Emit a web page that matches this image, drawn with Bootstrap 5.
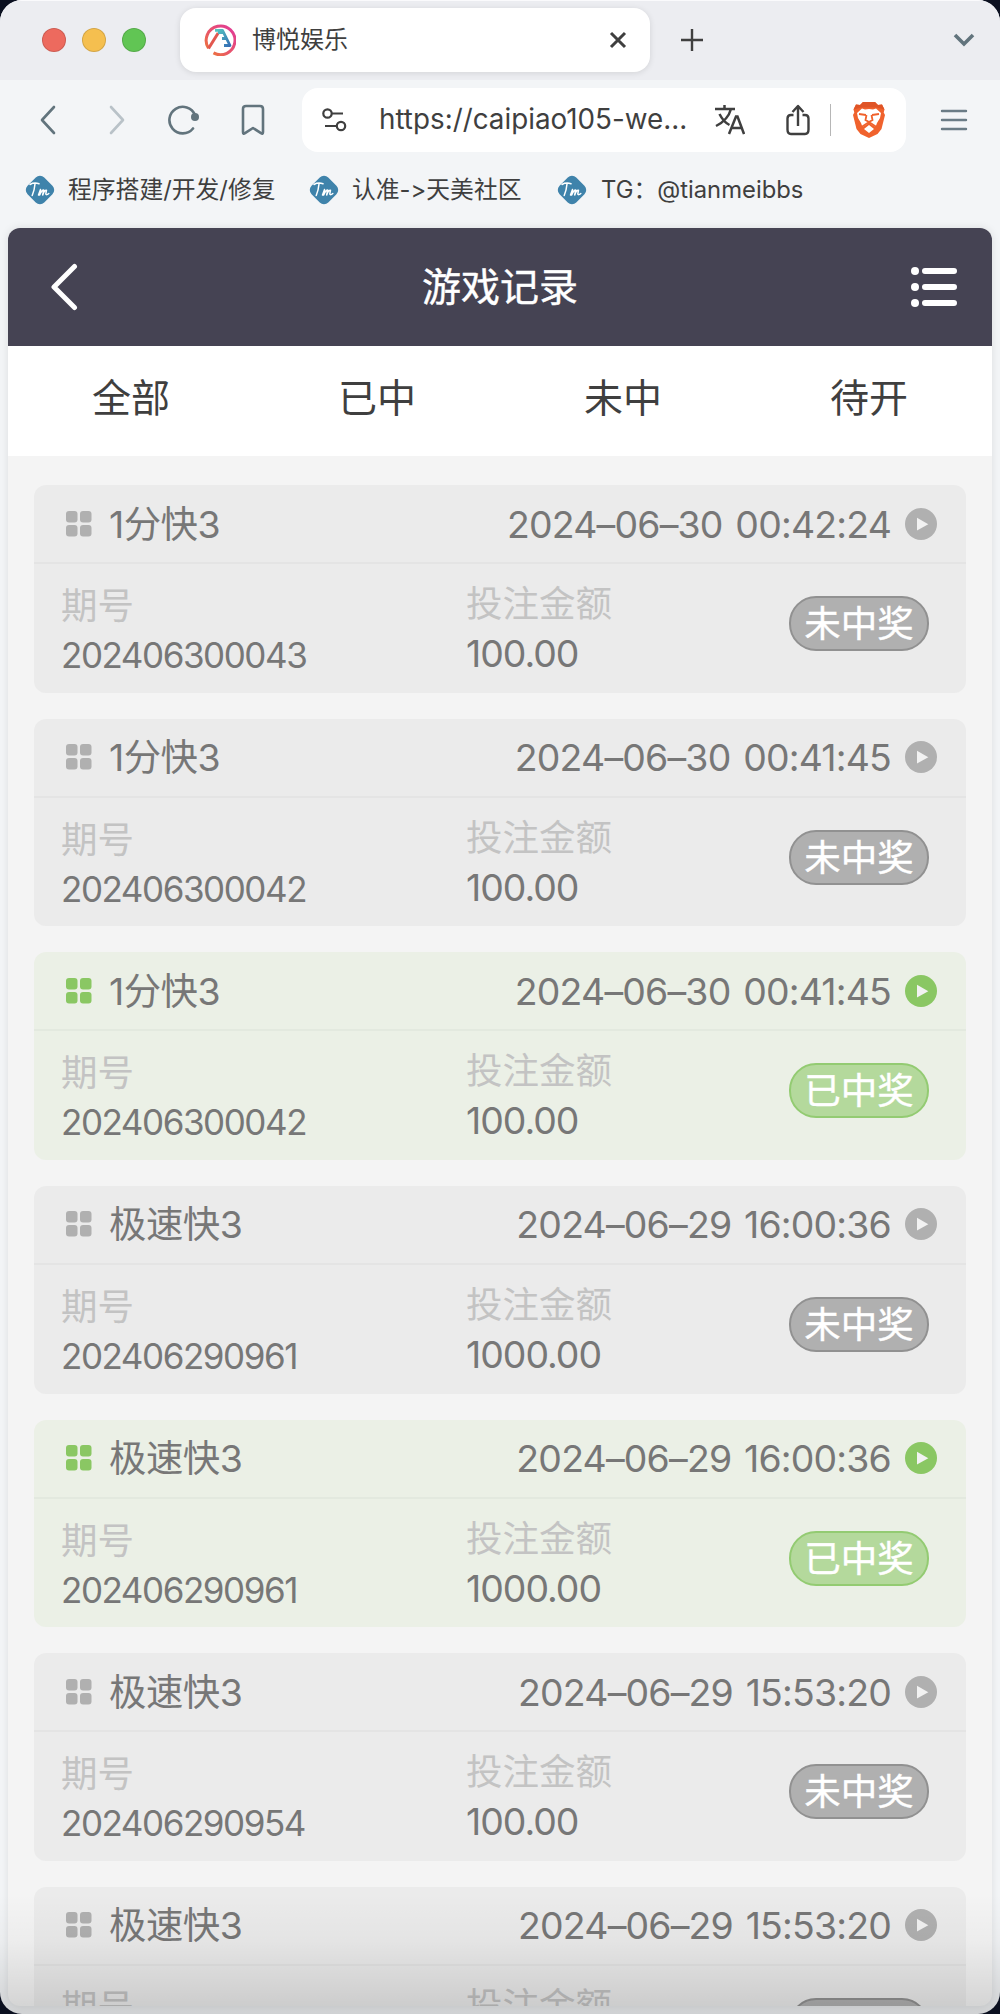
<!DOCTYPE html>
<html lang="zh-CN">
<head>
<meta charset="utf-8">
<meta name="viewport" content="width=device-width, initial-scale=1">
<title>博悦娱乐</title>
<link href="https://cdn.jsdelivr.net/npm/bootstrap@5.3.0/dist/css/bootstrap.min.css" rel="stylesheet">
<style>
body{background:#0b1020;font-family:Inter,"Noto Sans CJK SC",sans-serif;color:#3f3f3f;overflow:hidden}
svg{display:block;flex:none}
.window{width:1000px;height:2014px;background:#f3f5f7;border-radius:22px;overflow:hidden}
.tabstrip{height:80px;background:#ecedf1;padding:7px 25px 8px 42px;border-top:1px solid #fafafc}
.light{width:24px;height:24px;border-radius:50%;border:1px solid #0002}
.browser-tab{width:470px;height:64px;border-radius:16px;background:#fff;box-shadow:0 1px 6px #0000001c;margin-left:34px;padding:0 23px 0 24px;font-size:24px}
.toolbar{height:80px;padding:0 32px 0 40px}
.omni{width:604px;height:64px;border-radius:16px;background:#fff;padding:0 20px}
.url{font-size:27.800px;margin-left:32px;width:310px;white-space:nowrap}
.marks{height:60px;font-size:23.800px;padding-left:25px;white-space:nowrap;font-variant-ligatures:none;font-feature-settings:"calt" 0}
.app{margin:8px 8px 0;height:1778px;border-radius:12px;overflow:hidden;background:#f4f4f4;box-shadow:0 0 8px #0000001a}
.titlebar{height:118px;background:#454353;color:#fff;padding:0 34px 0 42px;font-size:39px}
.titlebar span{padding-right:8px;-webkit-text-stroke:.4px #fff}
.filters{height:110px;background:#fff;font-size:39px}
.filters .col{line-height:103px}
.records{padding:29px 26px 0}
.record{height:207.67px;margin-bottom:26px;border-radius:12px;background:#ebebeb;color:#777;--tone:#b0b0b0;--edge:#919191;--line:#e4e4e4;--fill:#b0b0b0}
.record.won{background:#ebf0e6;--tone:#8ac763;--edge:#93cb72;--line:#e3e9df;--fill:#b4d99c}
.rec-head{height:79px;border-bottom:2px solid var(--line);padding:0 29px 0 32px;color:var(--tone)}
.game,.stamp{color:#777;font-size:37.4px;line-height:74px;padding-top:2px}
.game{margin-left:17px;letter-spacing:-.5px}
.stamp{letter-spacing:-.8px;word-spacing:3px;margin-right:14px}
.rec-body{height:128px;padding:0 37px 0 27px}
.issue{width:405px;padding-top:17px}
.amount{width:323px;padding-top:15px}
.cap{font-size:36.5px;line-height:50px;color:#c3c3c3}
.issue-no{font-size:35px;letter-spacing:-1.450px;line-height:48px}
.sum{font-size:37.4px;letter-spacing:-1px;line-height:50px}
.verdict{width:140px;height:55px;border-radius:27px;border:2px solid var(--edge);background:var(--fill);color:#fff;font-size:36.5px;line-height:52px;margin-top:32px;-webkit-text-stroke:.4px #fff}
.fade-bottom{position:absolute;left:0;top:1894px;width:1000px;height:120px;border-radius:0 0 22px 22px;background:linear-gradient(#0000,#00000008 40%,#00000024)}
</style>
<script src="https://cdn.jsdelivr.net/npm/bootstrap@5.3.0/dist/js/bootstrap.bundle.min.js"></script>
</head>
<body>
<svg width="0" height="0" class="position-absolute">
<symbol id="grid" viewBox="0 0 26 26"><g fill="currentColor"><rect width="11.5" height="11.5" rx="3"/><rect x="14" width="11.5" height="11.5" rx="3"/><rect y="14" width="11.5" height="11.5" rx="3"/><rect x="14" y="14" width="11.5" height="11.5" rx="3"/></g></symbol>
<symbol id="play" viewBox="0 0 32 32"><circle cx="16" cy="16" r="16" fill="currentColor"/><path d="M12 9.800v12.800l11.300-6.400z" fill="#f2f2f2"/></symbol>
<symbol id="tm" viewBox="0 0 30 30"><rect x="3.200" y="3.200" width="23.600" height="23.600" rx="6" transform="rotate(45 15 15)" fill="#3f83ab"/><path d="M5 9.500q4-2.300 9-.8M10 9q-.5 6-2.800 11.500M13.500 20l2-5.500-.8 5.500q2-5 4-5l-1 5q1.500-5 3.800-4.800L20.800 19q.5 1.500 3-.5" fill="none" stroke="#fff" stroke-width="1.500" stroke-linecap="round" stroke-linejoin="round"/></symbol>
</svg>
<div class="window">
<div class="tabstrip d-flex align-items-center">
  <div class="d-flex gap-3"><i class="light" style="background:#ed6a5e"></i><i class="light" style="background:#f5bf4f"></i><i class="light" style="background:#61c554"></i></div>
  <div class="browser-tab d-flex align-items-center">
    <svg width="32" height="32" viewBox="0 0 32 32" fill="none"><defs><linearGradient id="ring" x1="1" y1="0" x2="0" y2="1"><stop stop-color="#e0389b"/><stop offset=".55" stop-color="#e8556a"/><stop offset="1" stop-color="#ee7b32"/></linearGradient><linearGradient id="leg" x1="0" y1="0" x2="1" y2="1"><stop stop-color="#55c8c0"/><stop offset="1" stop-color="#356fb5"/></linearGradient></defs><path d="M4.500 24.200A14.400 14.400 0 1 1 9.500 28.900" stroke="url(#ring)" stroke-width="3"/><path d="M4.500 24.500L14.200 9" stroke="#e2574f" stroke-width="3"/><path d="M11 6.400h7.500L26 21.500h-6M14 8.500h5M18 14.500h5" stroke="url(#leg)" stroke-width="2.800" stroke-linejoin="round"/></svg>
    <span class="ms-3 flex-grow-1">博悦娱乐</span>
    <svg width="18" height="18" viewBox="0 0 18 18" stroke="#3f3f3f" stroke-width="3"><path d="M2 2l14 14M16 2L2 16"/></svg>
  </div>
  <svg class="ms-auto" style="margin-right:250px" width="22" height="22" viewBox="0 0 22 22" stroke="#3f3f3f" stroke-width="2.400"><path d="M11 0v22M0 11h22"/></svg>
  <svg width="22" height="14" viewBox="0 0 22 14" fill="none" stroke="#62747d" stroke-width="3.600"><path d="M2 2l9 9 9-9"/></svg>
</div>
<div class="toolbar d-flex align-items-center">
  <svg width="16" height="30" viewBox="0 0 16 30" fill="none" stroke="#62747d" stroke-width="2.600" stroke-linecap="round" stroke-linejoin="round"><path d="M14 2L2 15l12 13"/></svg>
  <svg style="margin-left:53px" width="16" height="30" viewBox="0 0 16 30" fill="none" stroke="#b9c2c8" stroke-width="2.600" stroke-linecap="round" stroke-linejoin="round"><path d="M2 2l12 13L2 28"/></svg>
  <svg style="margin-left:43px" width="32" height="30" viewBox="0 0 32 30" fill="none"><path d="M27 10A13.300 13.300 0 1 0 25 23.500" stroke="#62747d" stroke-width="2.600" stroke-linecap="round"/><circle cx="27" cy="12" r="4" fill="#62747d"/></svg>
  <svg style="margin-left:41px" width="24" height="32" viewBox="0 0 24 32" fill="none" stroke="#62747d" stroke-width="2.600" stroke-linejoin="round"><path d="M2 5q0-3 3-3h14q3 0 3 3v23q0 2.500-2 1.200L12 24l-8 5.200Q2 30.500 2 28z"/></svg>
  <div class="omni d-flex align-items-center" style="margin-left:37px">
    <svg width="25" height="24" viewBox="0 0 25 24" fill="none" stroke="#3f3f3f" stroke-width="2.200"><circle cx="5.500" cy="5.500" r="4.200"/><path d="M10 5.500h11M3 18h11"/><circle cx="19" cy="18" r="4.200"/></svg>
    <span class="url">https://caipiao105-we...</span>
    <svg style="margin-left:27px" width="31" height="30" viewBox="0 0 31 30" fill="none" stroke="#3f3f3f" stroke-width="2.500"><path d="M1 4h20M10.500 0v4M17 4Q14 15 2 21M5.500 9q4 8 10 11M15 29l7-17.500h1.500L30 29M17.500 23h10"/></svg>
    <svg style="margin-left:41px" width="24" height="32" viewBox="0 0 24 32" fill="none" stroke="#3f3f3f" stroke-width="2.400" stroke-linejoin="round"><path d="M7.500 11H5q-3.500 0-3.500 3.500v11Q1.500 30 5 30h14q3.500 0 3.500-4.500v-11Q22.500 11 19 11h-2.500M12 22V2.500M6.500 8L12 2l5.500 6"/></svg>
    <i style="width:2px;height:32px;background:#b6b6b6;margin-left:20px"></i>
    <svg style="margin-left:21px" width="34" height="38" viewBox="0 0 34 38"><path d="M11 1h12l3 3 4-.5 2.500 5-.8 3L33 14l-3.500 14-4 5L17 37l-8.500-4-4-5L1 14l1.300-2.500-.8-3L4 3.500 8 4z" fill="#f0622d"/><path d="M11 1h12l3 3 4-.5 2.500 5-8-2H9.500l-8 2L4 3.500 8 4z" fill="#df5426"/><path d="M5 12l5-4.500 3 1 4-.5 4 .5 3-1 5 4.500-1 5-3 5-1.500 4L17 22l-6.500 4L9 22l-3-5zM12 28l5-4 5 4-5 4z" fill="#fff"/><path d="M7 13l7 1M27 13l-7 1M14.500 14l-1 5 3.500 2 3.500-2-1-5M9.500 26l7.500-5 7.500 5" fill="none" stroke="#f0622d" stroke-width="1.800"/></svg>
  </div>
  <svg class="ms-auto" width="28" height="22" viewBox="0 0 28 22" stroke="#6b7c86" stroke-width="2.400" stroke-linecap="round"><path d="M2 2h24M2 11h24M2 20h24"/></svg>
</div>
<div class="marks d-flex align-items-center">
  <svg width="30" height="30"><use href="#tm"/></svg><span style="margin-left:13px;width:216px">程序搭建/开发/修复</span>
  <svg style="margin-left:25px" width="30" height="30"><use href="#tm"/></svg><span style="margin-left:13px;width:180px">认准-&gt;天美社区</span>
  <svg style="margin-left:25px" width="30" height="30"><use href="#tm"/></svg><span style="margin-left:14px">TG：@tianmeibbs</span>
</div>
<main class="app">
<header class="titlebar d-flex align-items-center justify-content-between">
  <svg width="48" height="48" viewBox="0 0 48 48" fill="none" stroke="#fff" stroke-width="5" stroke-linecap="round" stroke-linejoin="round"><path d="M24.500 3.500L4 24l20.500 20.500"/></svg>
  <span>游戏记录</span>
  <svg width="48" height="42" viewBox="0 0 48 42" stroke="#fff" fill="#fff"><g stroke="none"><circle cx="5" cy="5" r="4"/><circle cx="5" cy="21" r="4"/><circle cx="5" cy="37" r="4"/></g><path d="M15 5h29M15 21h29M15 37h29" stroke-width="6" stroke-linecap="round"/></svg>
</header>
<nav class="filters row g-0 text-center"><div class="col">全部</div><div class="col">已中</div><div class="col">未中</div><div class="col">待开</div></nav>
<section class="records">
<article class="record">
  <div class="rec-head d-flex align-items-center"><svg width="26" height="26"><use href="#grid"/></svg><span class="game">1分快3</span><span class="stamp ms-auto">2024–06–30 00:42:24</span><svg width="32" height="32"><use href="#play"/></svg></div>
  <div class="rec-body d-flex"><div class="issue"><div class="cap">期号</div><div class="issue-no">202406300043</div></div><div class="amount"><div class="cap">投注金额</div><div class="sum">100.00</div></div><div class="verdict text-center">未中奖</div></div>
</article>
<article class="record">
  <div class="rec-head d-flex align-items-center"><svg width="26" height="26"><use href="#grid"/></svg><span class="game">1分快3</span><span class="stamp ms-auto">2024–06–30 00:41:45</span><svg width="32" height="32"><use href="#play"/></svg></div>
  <div class="rec-body d-flex"><div class="issue"><div class="cap">期号</div><div class="issue-no">202406300042</div></div><div class="amount"><div class="cap">投注金额</div><div class="sum">100.00</div></div><div class="verdict text-center">未中奖</div></div>
</article>
<article class="record won">
  <div class="rec-head d-flex align-items-center"><svg width="26" height="26"><use href="#grid"/></svg><span class="game">1分快3</span><span class="stamp ms-auto">2024–06–30 00:41:45</span><svg width="32" height="32"><use href="#play"/></svg></div>
  <div class="rec-body d-flex"><div class="issue"><div class="cap">期号</div><div class="issue-no">202406300042</div></div><div class="amount"><div class="cap">投注金额</div><div class="sum">100.00</div></div><div class="verdict text-center">已中奖</div></div>
</article>
<article class="record">
  <div class="rec-head d-flex align-items-center"><svg width="26" height="26"><use href="#grid"/></svg><span class="game">极速快3</span><span class="stamp ms-auto">2024–06–29 16:00:36</span><svg width="32" height="32"><use href="#play"/></svg></div>
  <div class="rec-body d-flex"><div class="issue"><div class="cap">期号</div><div class="issue-no">202406290961</div></div><div class="amount"><div class="cap">投注金额</div><div class="sum">1000.00</div></div><div class="verdict text-center">未中奖</div></div>
</article>
<article class="record won">
  <div class="rec-head d-flex align-items-center"><svg width="26" height="26"><use href="#grid"/></svg><span class="game">极速快3</span><span class="stamp ms-auto">2024–06–29 16:00:36</span><svg width="32" height="32"><use href="#play"/></svg></div>
  <div class="rec-body d-flex"><div class="issue"><div class="cap">期号</div><div class="issue-no">202406290961</div></div><div class="amount"><div class="cap">投注金额</div><div class="sum">1000.00</div></div><div class="verdict text-center">已中奖</div></div>
</article>
<article class="record">
  <div class="rec-head d-flex align-items-center"><svg width="26" height="26"><use href="#grid"/></svg><span class="game">极速快3</span><span class="stamp ms-auto">2024–06–29 15:53:20</span><svg width="32" height="32"><use href="#play"/></svg></div>
  <div class="rec-body d-flex"><div class="issue"><div class="cap">期号</div><div class="issue-no">202406290954</div></div><div class="amount"><div class="cap">投注金额</div><div class="sum">100.00</div></div><div class="verdict text-center">未中奖</div></div>
</article>
<article class="record">
  <div class="rec-head d-flex align-items-center"><svg width="26" height="26"><use href="#grid"/></svg><span class="game">极速快3</span><span class="stamp ms-auto">2024–06–29 15:53:20</span><svg width="32" height="32"><use href="#play"/></svg></div>
  <div class="rec-body d-flex"><div class="issue"><div class="cap">期号</div></div><div class="amount"><div class="cap">投注金额</div></div><div class="verdict"></div></div>
</article>
</section>
</main>
</div>
<div class="fade-bottom"></div>
</body>
</html>
